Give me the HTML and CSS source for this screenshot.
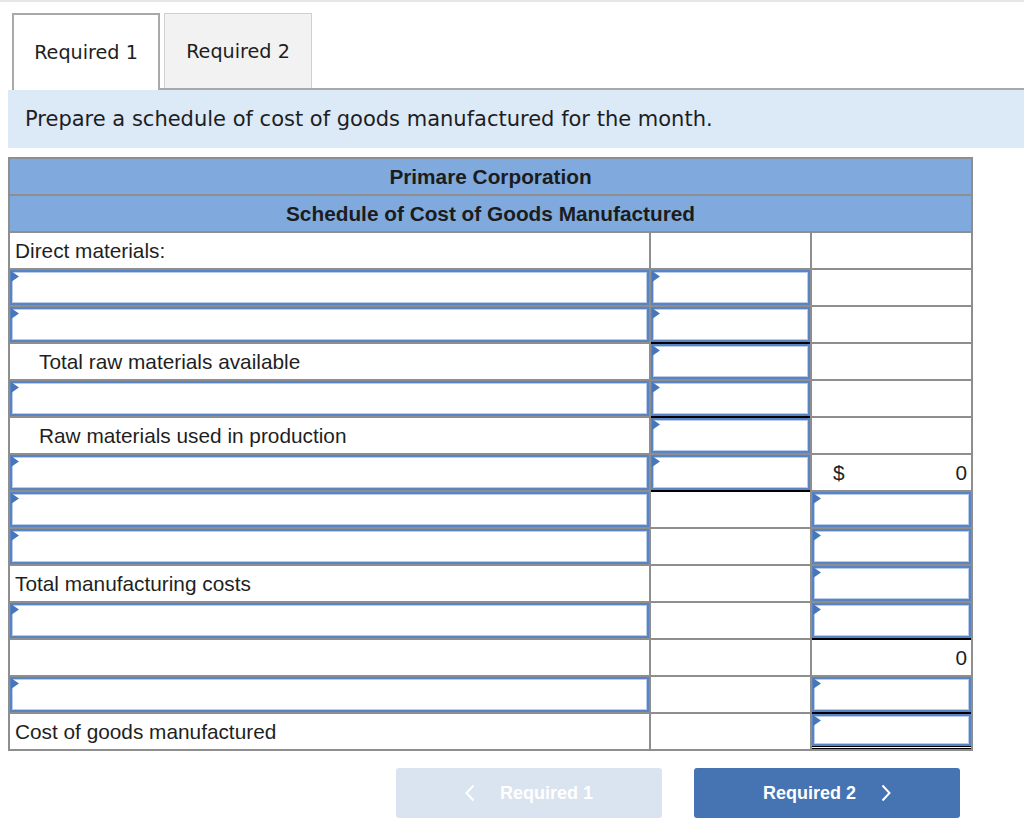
FILE: index.html
```html
<!DOCTYPE html>
<html lang="en">
<head>
<meta charset="utf-8">
<title>Schedule of Cost of Goods Manufactured</title>
<link rel="stylesheet" href="styles.css">
</head>
<body>
<div class="tabs">
  <div class="tab active">Required 1</div>
  <div class="tab">Required 2</div>
</div>
<div class="prompt">Prepare a schedule of cost of goods manufactured for the month.</div>

<div class="sheet">
  <div class="head">Primare Corporation</div>
  <div class="head">Schedule of Cost of Goods Manufactured</div>

  <div class="cell label">Direct materials:</div>
  <div class="cell"></div>
  <div class="cell"></div>

  <div class="cell in"><input class="inp" type="text"></div>
  <div class="cell in"><input class="inp" type="text"></div>
  <div class="cell"></div>

  <div class="cell in"><input class="inp" type="text"></div>
  <div class="cell in"><input class="inp" type="text"></div>
  <div class="cell"></div>

  <div class="cell label indent">Total raw materials available</div>
  <div class="cell in ul"><input class="inp" type="text"></div>
  <div class="cell"></div>

  <div class="cell in"><input class="inp" type="text"></div>
  <div class="cell in"><input class="inp" type="text"></div>
  <div class="cell"></div>

  <div class="cell label indent">Raw materials used in production</div>
  <div class="cell in ul"><input class="inp" type="text"></div>
  <div class="cell"></div>

  <div class="cell in"><input class="inp" type="text"></div>
  <div class="cell in"><input class="inp" type="text"></div>
  <div class="cell amount"><span>$</span><span>0</span></div>

  <div class="cell in"><input class="inp" type="text"></div>
  <div class="cell ul"></div>
  <div class="cell in"><input class="inp" type="text"></div>

  <div class="cell in"><input class="inp" type="text"></div>
  <div class="cell"></div>
  <div class="cell in"><input class="inp" type="text"></div>

  <div class="cell label">Total manufacturing costs</div>
  <div class="cell"></div>
  <div class="cell in"><input class="inp" type="text"></div>

  <div class="cell in"><input class="inp" type="text"></div>
  <div class="cell"></div>
  <div class="cell in"><input class="inp" type="text"></div>

  <div class="cell"></div>
  <div class="cell"></div>
  <div class="cell amount ul right"><span>0</span></div>

  <div class="cell in"><input class="inp" type="text"></div>
  <div class="cell"></div>
  <div class="cell in"><input class="inp" type="text"></div>

  <div class="cell label">Cost of goods manufactured</div>
  <div class="cell"></div>
  <div class="cell in ul dbl"><input class="inp" type="text"></div>
</div>

<div class="nav">
  <button class="btn prev" type="button">
    <svg class="chev" width="10" height="18" viewBox="0 0 10 18"><polyline points="8.5,1.5 1.5,9 8.5,16.5" fill="none" stroke="#fff" stroke-width="2"/></svg>
    <span>Required 1</span>
  </button>
  <button class="btn next" type="button">
    <span>Required 2</span>
    <svg class="chev" width="10" height="18" viewBox="0 0 10 18"><polyline points="1.5,1.5 8.5,9 1.5,16.5" fill="none" stroke="#fff" stroke-width="2"/></svg>
  </button>
</div>
</body>
</html>
```
FILE: styles.css
```css
html, body {
  margin: 0;
  padding: 0;
  background: #fff;
}

body {
  border-top: 2px solid #e6e6e6;
  font-family: "Liberation Sans", Arial, sans-serif;
  color: #1f1f1f;
}

.tabs {
  display: flex;
  align-items: flex-start;
  gap: 4px;
  margin: 11px 0 0 12px;
  border-bottom: 2px solid #a9a9a9;
}

.tab {
  box-sizing: border-box;
  width: 148px;
  height: 75px;
  display: flex;
  align-items: center;
  justify-content: center;
  font-family: "DejaVu Sans", Verdana, sans-serif;
  font-size: 19.2px;
  color: #1e1e1e;
  background: #f2f2f2;
  border: 1px solid #cfcfcf;
  border-bottom: none;
}

.tab.active {
  height: 77px;
  margin-bottom: -2px;
  background: #fff;
  border: 2px solid #a9a9a9;
  border-bottom: none;
}

.prompt {
  margin-left: 8px;
  height: 58px;
  display: flex;
  align-items: center;
  padding-left: 17px;
  background: #dce9f6;
  font-family: "DejaVu Sans", Verdana, sans-serif;
  font-size: 21px;
  color: #1e1e1e;
}

.sheet {
  margin: 9px 0 0 8px;
  width: max-content;
  display: grid;
  grid-template-columns: 639px 159px 159px;
  grid-auto-rows: 35px;
  gap: 2px;
  padding: 2px;
  background: #8e8e8e;
  font-size: 20.8px;
}

.head {
  grid-column: 1 / -1;
  background: #80aadd;
  display: flex;
  align-items: center;
  justify-content: center;
  font-weight: bold;
  color: #1c1c1c;
}

.cell {
  position: relative;
  background: #fff;
  display: flex;
  align-items: center;
  box-sizing: border-box;
}

.label {
  padding-left: 5px;
}

.label.indent {
  padding-left: 29px;
}

.in::before {
  content: "";
  position: absolute;
  z-index: 1;
  top: 1px;
  left: 1px;
  width: 8px;
  height: 11px;
  background: #4677bd;
  clip-path: polygon(0 0, 100% 50%, 0 100%);
}

.inp {
  box-sizing: border-box;
  display: block;
  width: 100%;
  height: 100%;
  margin: 0;
  padding: 0;
  border: 2px solid #5884c4;
  box-shadow: inset 0 0 0 1px #b9cdea;
  background: #fff;
  outline: none;
}

.ul {
  box-shadow: 0 -2px 0 #000;
}

.dbl {
  border-bottom: 3px double #000;
}

.amount {
  justify-content: space-between;
  padding: 0 4px 0 21px;
}

.amount.right {
  justify-content: flex-end;
}

.nav {
  width: 965px;
  margin: 17px 0 0 8px;
  display: flex;
  justify-content: flex-end;
  gap: 32px;
  padding-right: 13px;
  box-sizing: border-box;
}

.btn {
  width: 266px;
  height: 50px;
  border: none;
  border-radius: 3px;
  display: flex;
  align-items: center;
  justify-content: center;
  gap: 25px;
  font-family: "Liberation Sans", Arial, sans-serif;
  font-weight: bold;
  font-size: 18px;
  color: #fff;
  cursor: pointer;
}

.btn.prev {
  background: #dae4f0;
}

.btn.next {
  background: #4673b2;
}

.chev {
  display: block;
}
```
